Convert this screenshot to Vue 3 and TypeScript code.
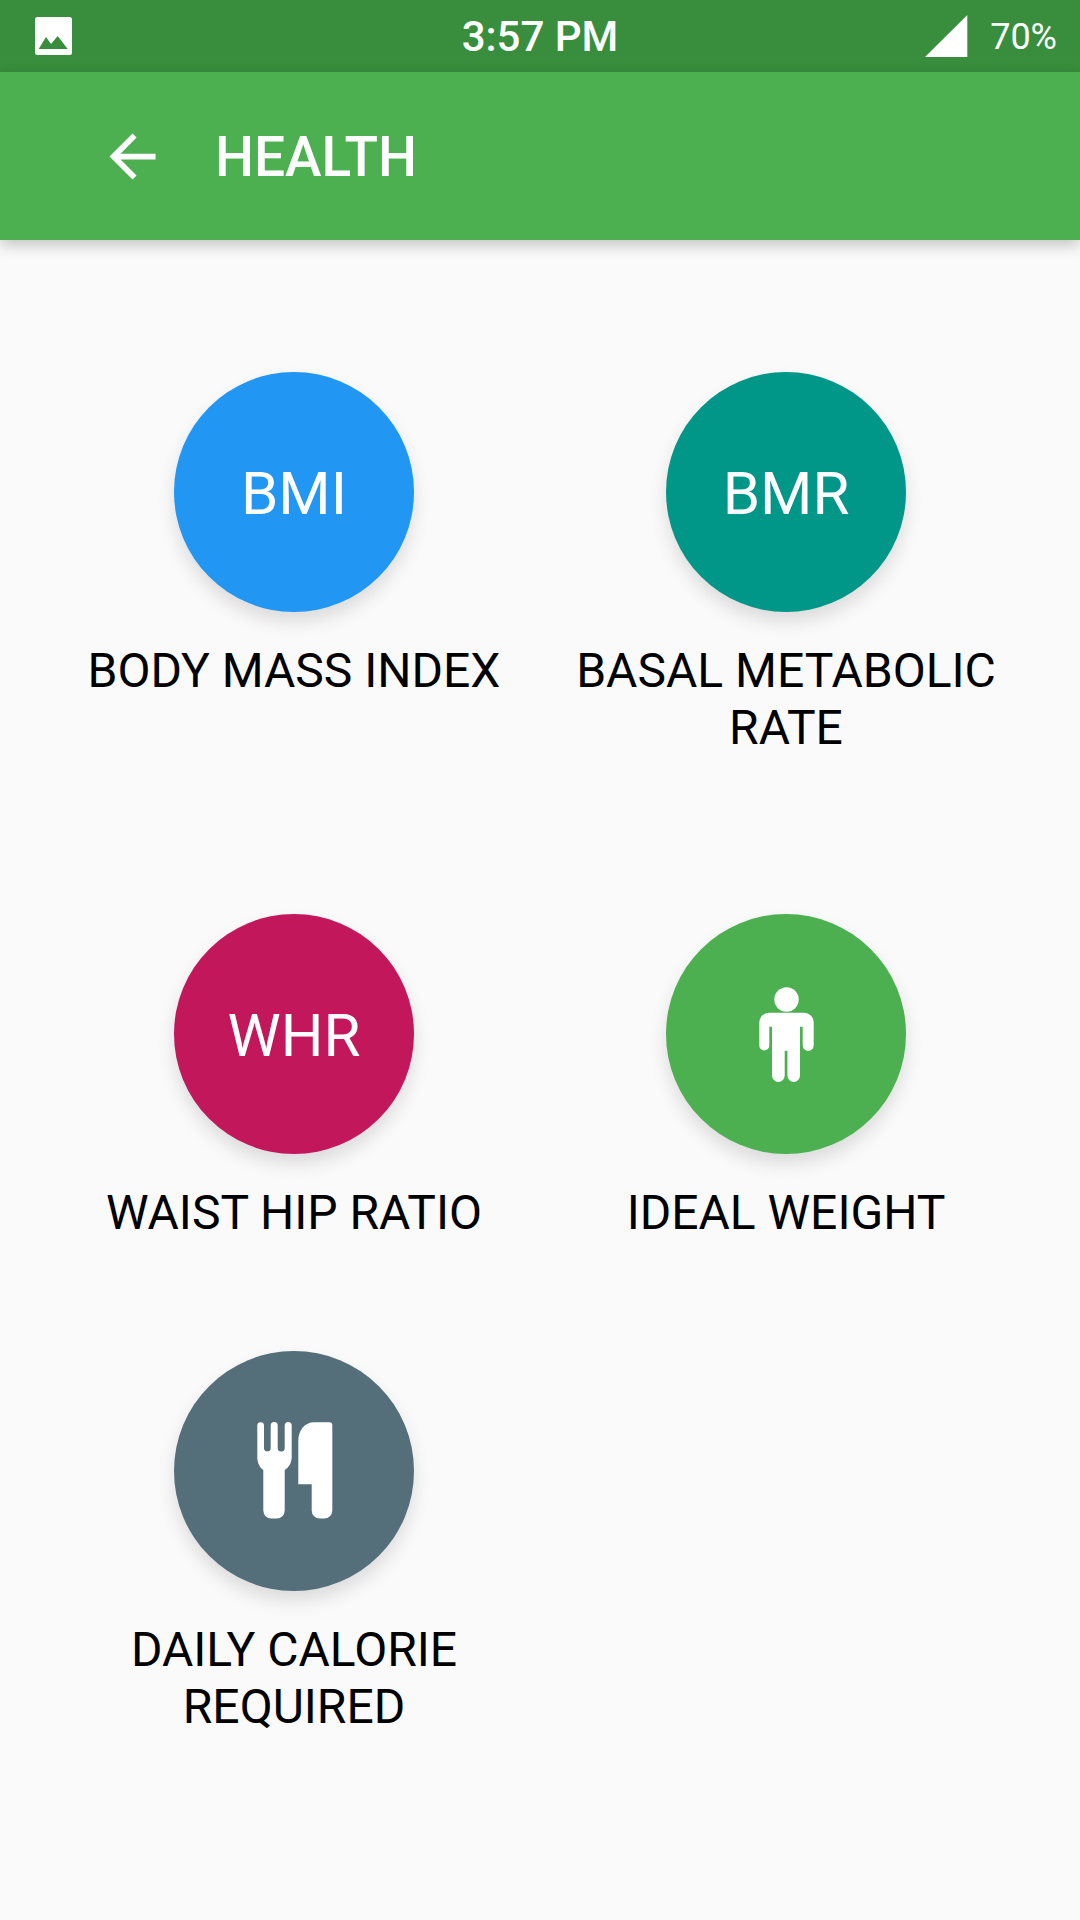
<script setup lang="ts">
interface Tile {
  label: string
  color: string
  text?: string
  icon?: 'person' | 'food'
}
const tiles: Tile[] = [
  { label: 'BODY MASS INDEX', color: '#2196F3', text: 'BMI' },
  { label: 'BASAL METABOLIC RATE', color: '#009688', text: 'BMR' },
  { label: 'WAIST HIP RATIO', color: '#C2185B', text: 'WHR' },
  { label: 'IDEAL WEIGHT', color: '#4CAF50', icon: 'person' },
  { label: 'DAILY CALORIE REQUIRED', color: '#546E7A', icon: 'food' },
]
</script>

<template>
  <div class="screen">
    <div class="status">
      <div class="status-left">
        <svg class="pic" width="37" height="38" viewBox="0 0 37 38">
          <rect width="37" height="38" rx="2.5" fill="#fff" />
          <path d="M3.7 32 11 20 16 27 22.7 19 32.7 32Z" fill="#388E3C" />
        </svg>
      </div>
      <div class="time">3:57 PM</div>
      <div class="status-right">
        <svg width="43" height="42" viewBox="0 0 43 42"><path d="M42.3 0V42H0Z" fill="#fff" /></svg>
        <span class="battery">70%</span>
      </div>
    </div>
    <header class="bar">
      <svg class="back" width="69" height="69" viewBox="0 0 24 24">
        <path d="M20 11H7.83l5.59-5.59L12 4l-8 8 8 8 1.41-1.41L7.83 13H20v-2z" fill="#fff" />
      </svg>
      <h1 class="title">HEALTH</h1>
    </header>
    <main class="grid">
      <div v-for="t in tiles" :key="t.label" class="tile">
        <div class="circle" :style="{ background: t.color }">
          <span v-if="t.text" class="abbr">{{ t.text }}</span>
          <svg v-else-if="t.icon === 'person'" width="96" height="96" viewBox="0 0 96 96">
            <circle cx="48.5" cy="13.5" r="12.2" fill="#fff" />
            <path
              d="M31 26.7H66A9.7 9.7 0 0 1 75.7 36.4V59.4A5.5 5.5 0 0 1 64.7 59.4V40.7H62V89.6A6.1 6.1 0 0 1 49.4 89.6V64.7H46.7V89.6A6.2 6.2 0 0 1 34 89.6V40.7H31.3V59.4A5 5 0 0 1 21.3 59.4V36.4A9.7 9.7 0 0 1 31 26.7Z"
              fill="#fff"
            />
          </svg>
          <svg v-else width="120" height="120" viewBox="0 0 120 120">
            <path
              d="M23.3 14.6A3.35 3.35 0 0 1 30 14.6V37A3.35 3.35 0 0 0 36.7 37V14.6A3.5 3.5 0 0 1 43.7 14.6V37A3.5 3.5 0 0 0 50.7 37V14.6A3.5 3.5 0 0 1 57.7 14.6V46C57.7 52 54.5 57 50.7 59V99.5A8 8 0 0 1 42.7 107.5H37.3A8 8 0 0 1 29.3 99.5V59C26 57 23.3 52 23.3 46Z"
              fill="#fff"
            />
            <path
              d="M64.3 30C64.3 19 71 11.3 80 11.3H95.3A3 3 0 0 1 98.3 14.3V99.5A8 8 0 0 1 90.3 107.5H85.7A8 8 0 0 1 77.7 99.5V73.3H64.3Z"
              fill="#fff"
            />
          </svg>
        </div>
        <div class="label">{{ t.label }}</div>
      </div>
    </main>
  </div>
</template>

<style scoped>
.screen {
  width: 1080px;
  height: 1920px;
  background: #fafafa;
  font-family: Roboto, "Liberation Sans", sans-serif;
  overflow: hidden;
}
.status {
  height: 72px;
  background: #388e3c;
  color: #fff;
  display: grid;
  grid-template-columns: 1fr auto 1fr;
  align-items: center;
}
.status-left {
  padding-left: 35px;
  display: flex;
}
.pic {
  display: block;
}
.time {
  font-size: 42px;
  font-weight: 500;
  padding-top: 1px;
}
.status-right {
  display: flex;
  align-items: center;
  justify-content: flex-end;
  gap: 22px;
  padding-right: 23px;
}
.battery {
  font-size: 36px;
  padding-top: 1px;
}
.bar {
  height: 168px;
  background: #4caf50;
  color: #fff;
  display: flex;
  align-items: center;
  gap: 48px;
  padding-left: 98px;
  box-shadow: 0 5px 14px rgba(0, 0, 0, 0.22);
  position: relative;
}
.back {
  display: block;
}
.title {
  margin: 2px 0 0;
  font-size: 55px;
  font-weight: 500;
}
.grid {
  display: grid;
  grid-template-columns: 492px 492px;
  grid-template-rows: 542px 437px;
  padding: 132px 48px 0;
}
.tile {
  display: flex;
  flex-direction: column;
  align-items: center;
}
.circle {
  width: 240px;
  height: 240px;
  border-radius: 50%;
  display: flex;
  align-items: center;
  justify-content: center;
  color: #fff;
  font-size: 60px;
  box-shadow: 0 10px 18px rgba(0, 0, 0, 0.12);
}
.abbr {
  padding-top: 2px;
}
.label {
  margin-top: 30px;
  width: 440px;
  text-align: center;
  font-size: 48px;
  line-height: 57px;
  color: #000;
}
</style>
